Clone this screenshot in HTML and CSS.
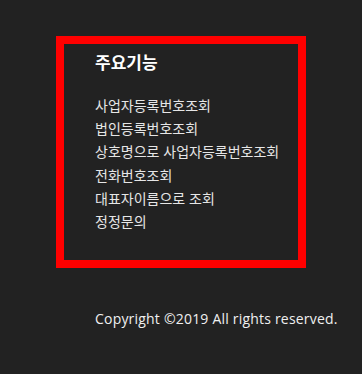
FILE: index.html
```html
<!DOCTYPE html>
<html lang="ko">
<head>
<meta charset="utf-8">
<link rel="stylesheet" href="styles.css">
</head>
<body>
<footer class="footer">
  <section class="features">
    <h2 class="features-title">주요기능</h2>
    <ul class="features-list">
      <li>사업자등록번호조회</li>
      <li>법인등록번호조회</li>
      <li>상호명으로 사업자등록번호조회</li>
      <li>전화번호조회</li>
      <li>대표자이름으로 조회</li>
      <li>정정문의</li>
    </ul>
  </section>
  <p class="copyright">Copyright ©2019 All rights reserved.</p>
</footer>
</body>
</html>
```
FILE: styles.css
```css
html, body {
  margin: 0;
  padding: 0;
  background: #222222;
  height: 100%;
}
body {
  font-family: "Noto Sans CJK KR", "Noto Sans", sans-serif;
}
.footer {
  padding: 36px 0 0 56px;
}
.features {
  box-sizing: border-box;
  width: 250px;
  height: 232px;
  border: 8px solid #ff0000;
  padding: 5px 0 0 31px;
}
.features-title {
  margin: 0;
  font-size: 17px;
  font-weight: 700;
  color: #ffffff;
  line-height: 26px;
}
.features-list {
  list-style: none;
  margin: 19px 0 0;
  padding: 0;
}
.features-list li {
  font-size: 14px;
  line-height: 23.2px;
  color: #e6e6e6;
}
.copyright {
  margin: 41px 0 0 39px;
  font-family: "Open Sans", "Liberation Sans", sans-serif;
  font-size: 14px;
  letter-spacing: 0.2px;
  color: #f0f0f0;
  line-height: 20px;
}
```
